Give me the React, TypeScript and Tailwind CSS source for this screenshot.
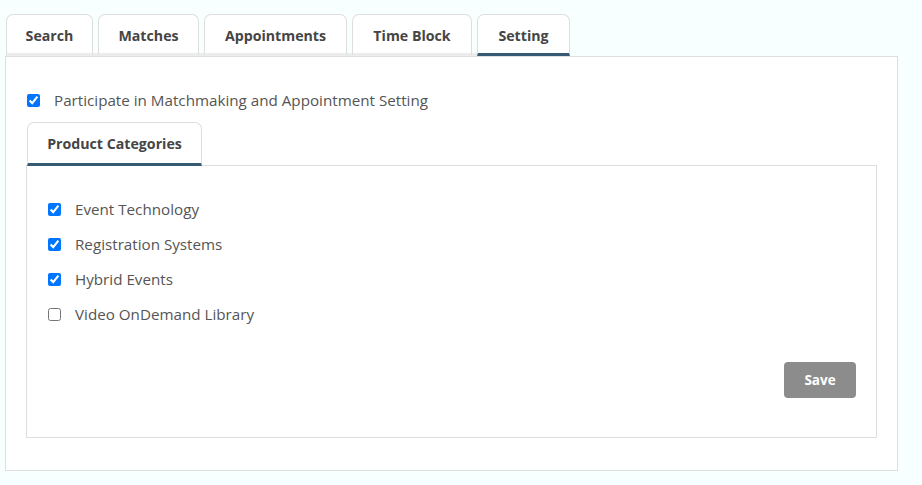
import React from "react";

const tabs = [
  { label: "Search", w: "w-[87px]" },
  { label: "Matches", w: "w-[101px]" },
  { label: "Appointments", w: "w-[143px]" },
  { label: "Time Block", w: "w-[120px]" },
  { label: "Setting", w: "w-[93px]", active: true },
];

const items = [
  { label: "Event Technology", checked: true },
  { label: "Registration Systems", checked: true },
  { label: "Hybrid Events", checked: true },
  { label: "Video OnDemand Library", checked: false },
];

export default function App() {
  return (
    <div
      className="min-h-[485px] w-[922px] bg-[#f8ffff] px-[5px] pt-[14px] text-[#555]"
      style={{ fontFamily: '"Open Sans", "Noto Sans", sans-serif' }}
    >
      <div className="flex w-[893px] flex-col">
        <div className="ml-px flex gap-[5px] self-start border-b-[3px] border-[#ececec]">
          {tabs.map((t) => (
            <div
              key={t.label}
              className={`${t.w} -mb-[3px] flex h-[42px] items-center justify-center rounded-t-[7px] border border-b-[3px] border-[#dedede] bg-white text-[14.2px] font-bold text-[#454545] ${
                t.active ? "border-b-[#365a73]" : "border-b-[#ececec]"
              }`}
            >
              <span className="mt-[3px]">{t.label}</span>
            </div>
          ))}
        </div>
        <div className="border border-[#dedede] bg-white px-[20px] pb-[32px] pt-[31px]">
          <label className="flex h-[24px] items-center pl-[1px]">
            <input type="checkbox" defaultChecked className="m-0 h-[13px] w-[13px]" />
            <span className="ml-[14px] text-[15.2px]">Participate in Matchmaking and Appointment Setting</span>
          </label>
          <div className="mt-[10px] flex">
            <div className="ml-px flex h-[44px] w-[175px] items-center justify-center rounded-t-[7px] border border-b-[3px] border-[#dedede] border-b-[#365a73] bg-white text-[14.2px] font-bold text-[#454545]">
              <span className="mt-[2px]">Product Categories</span>
            </div>
          </div>
          <div className="-mt-px flex flex-col border border-[#dedede] bg-white px-[20px] pb-[39px] pt-[26px]">
            {items.map((it) => (
              <label key={it.label} className="flex h-[35px] items-center pl-[1px]">
                <input type="checkbox" defaultChecked={it.checked} className="m-0 h-[13px] w-[13px]" />
                <span className="ml-[14px] text-[15.2px]">{it.label}</span>
              </label>
            ))}
            <div className="mt-[30px] flex justify-end">
              <button className="flex h-[36px] w-[72px] items-center justify-center rounded-[4px] bg-[#8c8c8c] text-[13.5px] font-bold text-white">
                Save
              </button>
            </div>
          </div>
        </div>
      </div>
    </div>
  );
}
